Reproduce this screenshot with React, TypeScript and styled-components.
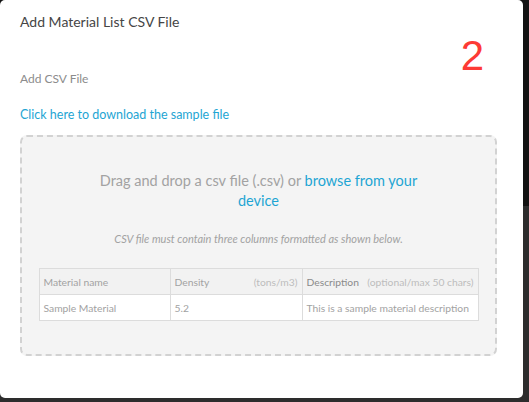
import React from 'react'
import styled, { createGlobalStyle } from 'styled-components'

const GlobalStyle = createGlobalStyle`
  html, body {
    margin: 0;
    padding: 0;
  }
  body {
    width: 529px;
    height: 402px;
    overflow: hidden;
    font-family: 'Lato', 'Open Sans', sans-serif;
    background: linear-gradient(to bottom, #131313 0, #131313 206px, #2d2d2d 206px);
  }
`

const palette = {
  title: '#454545',
  label: '#8c8c8c',
  link: '#1ea5d3',
  muted: '#a2a2a2',
  border: '#dcdcdc',
  zone: '#f4f4f4',
}

const Backdrop = styled.div`
  width: 529px;
  height: 402px;
  padding: 0 6px 4px 0;
  box-sizing: border-box;
`

const Modal = styled.div`
  position: relative;
  height: 100%;
  background: #fff;
  border-radius: 5px;
  padding: 13px 26px 0 20px;
  box-sizing: border-box;

  h2 {
    margin: 0;
    font-size: 14px;
    font-weight: 400;
    color: ${palette.title};
    line-height: 18px;
  }
`

const StepBadge = styled.span`
  position: absolute;
  top: 33px;
  right: 39px;
  font-family: 'Liberation Sans', Arial, sans-serif;
  font-size: 42px;
  color: #fd3a35;
  line-height: 46px;
`

const FieldLabel = styled.p`
  margin: 40px 0 0;
  font-size: 12px;
  color: ${palette.label};
  line-height: 16px;
`

const SampleLink = styled.a`
  display: block;
  margin-top: 20px;
  font-size: 12.5px;
  color: ${palette.link};
  text-decoration: none;
  line-height: 16px;
  cursor: pointer;
`

const DropZone = styled.div`
  margin-top: 12px;
  width: 477px;
  height: 221px;
  box-sizing: border-box;
  border: 2px dashed #d2d2d2;
  border-radius: 7px;
  background: ${palette.zone};
  display: flex;
  flex-direction: column;
  align-items: center;
  padding-top: 34px;

  .drop-text {
    width: 340px;
    margin: 0;
    text-align: center;
    font-size: 14.5px;
    line-height: 20px;
    color: ${palette.muted};

    a {
      color: ${palette.link};
      cursor: pointer;
    }
  }

  .drop-hint {
    margin: 21px 0 0;
    font-size: 11px;
    font-style: italic;
    color: ${palette.muted};
    line-height: 14px;
  }
`

const SampleTable = styled.table`
  margin-top: 22px;
  width: 440px;
  border-collapse: collapse;
  font-size: 10.3px;
  color: ${palette.muted};

  td {
    border: 1px solid ${palette.border};
    height: 25px;
    padding: 0 4px;
    white-space: nowrap;
  }
`

const HeaderRow = styled.tr`
  background: #f2f2f2;
`

const BodyRow = styled.tr`
  background: #fff;
`

const HeaderCell = styled.div`
  display: flex;
  justify-content: space-between;
  gap: 6px;

  b {
    font-weight: 400;
    color: #8a8a8a;
  }

  span {
    color: #bdbdbd;
  }
`

const App: React.FC = () => {
  return (
    <Backdrop>
      <GlobalStyle />
      <Modal>
        <h2>Add Material List CSV File</h2>
        <StepBadge>2</StepBadge>
        <FieldLabel>Add CSV File</FieldLabel>
        <SampleLink>Click here to download the sample file</SampleLink>
        <DropZone>
          <p className='drop-text'>
            Drag and drop a csv file (.csv) or <a>browse from your device</a>
          </p>
          <p className='drop-hint'>CSV file must contain three columns formatted as shown below.</p>
          <SampleTable>
            <tbody>
              <HeaderRow>
                <td style={{ width: 122 }}>Material name</td>
                <td style={{ width: 123 }}>
                  <HeaderCell>
                    Density <span>(tons/m3)</span>
                  </HeaderCell>
                </td>
                <td>
                  <HeaderCell>
                    <b>Description</b> <span>(optional/max 50 chars)</span>
                  </HeaderCell>
                </td>
              </HeaderRow>
              <BodyRow>
                <td>Sample Material</td>
                <td>5.2</td>
                <td>This is a sample material description</td>
              </BodyRow>
            </tbody>
          </SampleTable>
        </DropZone>
      </Modal>
    </Backdrop>
  )
}

export default App
